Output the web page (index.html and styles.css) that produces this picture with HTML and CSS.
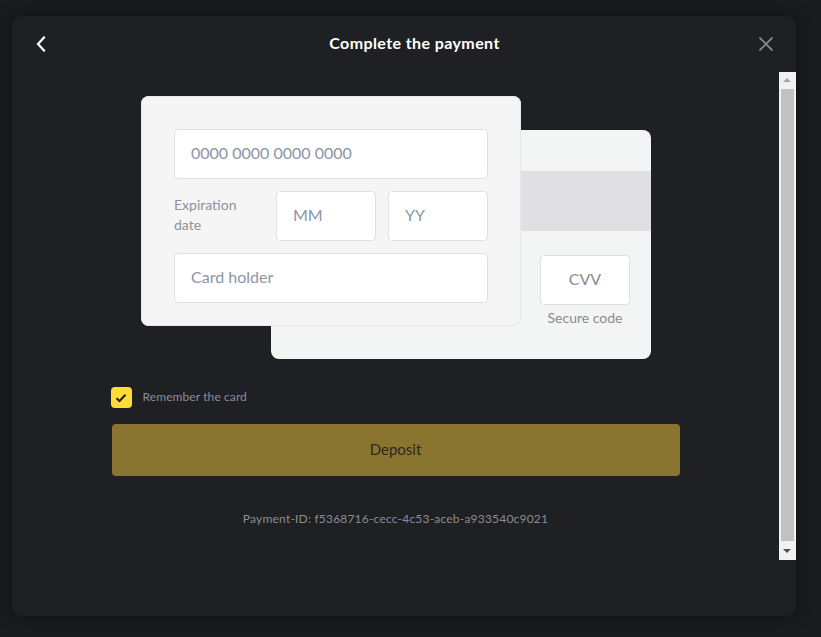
FILE: index.html
```html
<!DOCTYPE html>
<html lang="en">
<head>
<meta charset="utf-8">
<title>Complete the payment</title>
<link rel="stylesheet" href="styles.css">
</head>
<body>
<div class="backdrop">
  <div class="modal">
    <header class="modal-header">
      <button class="icon-btn back" aria-label="Back">
        <svg width="12" height="16" viewBox="0 0 12 16"><path d="M9 1.5 L3 8 L9 14.5" fill="none" stroke="#ffffff" stroke-width="2.2" stroke-linecap="square"/></svg>
      </button>
      <h1 class="title">Complete the payment</h1>
      <button class="icon-btn close" aria-label="Close">
        <svg width="16" height="16" viewBox="0 0 16 16"><path d="M1.5 1.5 L14.5 14.5 M14.5 1.5 L1.5 14.5" fill="none" stroke="#84858d" stroke-width="1.8"/></svg>
      </button>
    </header>
    <div class="modal-body">
      <div class="scroll-content">
        <div class="cards">
          <div class="card card-back">
            <div class="stripe"></div>
            <div class="cvv-wrap">
              <div class="field cvv">CVV</div>
              <div class="cvv-label">Secure code</div>
            </div>
          </div>
          <div class="card card-front">
            <div class="field wide">0000 0000 0000 0000</div>
            <div class="exp-row">
              <div class="exp-label">Expiration<br>date</div>
              <div class="field">MM</div>
              <div class="field">YY</div>
            </div>
            <div class="field wide">Card holder</div>
          </div>
        </div>
        <div class="form-bottom">
          <label class="remember">
            <span class="checkbox">
              <svg width="12" height="10" viewBox="0 0 12 10"><path d="M1.5 5.2 L4.5 8 L10.5 1.8" fill="none" stroke="#1f2024" stroke-width="2"/></svg>
            </span>
            <span class="remember-text">Remember the card</span>
          </label>
          <button class="deposit">Deposit</button>
          <p class="payment-id">Payment-ID: f5368716-cecc-4c53-aceb-a933540c9021</p>
        </div>
      </div>
      <div class="scrollbar">
        <div class="sb-arrow up"></div>
        <div class="sb-thumb"></div>
        <div class="sb-arrow down"></div>
      </div>
    </div>
  </div>
</div>
</body>
</html>
```

FILE: styles.css
```css
* { box-sizing: border-box; }
html, body { margin: 0; padding: 0; }
body {
  background: #1a1b1e;
  font-family: Lato, "Noto Sans", sans-serif;
  width: 821px;
  height: 637px;
  overflow: hidden;
}
.backdrop {
  padding: 16px 25px 21px 12px;
  height: 637px;
}
.modal {
  width: 784px;
  height: 600px;
  background: #1f2024;
  border-radius: 10px;
  box-shadow: 0 0 18px rgba(0,0,0,0.35);
  display: flex;
  flex-direction: column;
}
.modal-header {
  height: 56px;
  display: flex;
  align-items: center;
  justify-content: space-between;
  padding: 0 21px 0 20px;
}
.icon-btn {
  background: none;
  border: 0;
  padding: 0;
  width: 18px;
  height: 18px;
  display: flex;
  align-items: center;
  justify-content: center;
  cursor: pointer;
}
.title {
  margin: 0;
  color: #ffffff;
  font-size: 16px;
  font-weight: 700;
  letter-spacing: 0.4px;
  padding-left: 22px;
  line-height: 20px;
  transform: translateY(-1px);
}
.modal-body {
  height: 488px;
  display: flex;
}
.scroll-content {
  flex: 1;
  padding-top: 24px;
  display: flex;
  flex-direction: column;
  align-items: center;
}
.cards {
  display: grid;
  width: 510px;
  margin-left: 1px;
}
.card {
  grid-area: 1 / 1;
  width: 380px;
  border-radius: 8px;
}
.card-front {
  background: #f5f5f5;
  height: 230px;
  padding: 33px 33px 23px;
  display: flex;
  flex-direction: column;
  gap: 12px;
  z-index: 2;
  box-shadow: inset 0 0 0 1px #e6e7e9;
}
.card-back {
  background: #f3f4f4;
  height: 229px;
  margin: 34px 0 0 130px;
  padding-top: 41px;
  z-index: 1;
}
.stripe {
  height: 60px;
  background: #e0e0e2;
}
.cvv-wrap {
  display: flex;
  flex-direction: column;
  align-items: center;
  width: 90px;
  margin: 24px 0 0 269px;
}
.field {
  background: #ffffff;
  border: 1px solid #dfe0e2;
  border-radius: 4px;
  height: 50px;
  display: flex;
  align-items: center;
  padding: 0 0 3px 16px;
  font-size: 16px;
  color: #8b95a6;
}
.field.wide { width: 314px; }
.exp-row {
  display: grid;
  grid-template-columns: 90px 100px 100px;
  gap: 12px;
  align-items: center;
}
.exp-label {
  font-size: 14px;
  line-height: 20px;
  color: #8d929c;
  margin-top: -2px;
}
.cvv {
  width: 90px;
  padding-left: 0;
  justify-content: center;
  color: #8a8b93;
}
.cvv-label {
  margin-top: 4px;
  font-size: 14px;
  color: #8a8b93;
  white-space: nowrap;
}
.form-bottom {
  width: 568px;
  margin-top: 28px;
  display: flex;
  flex-direction: column;
}
.remember {
  display: flex;
  align-items: center;
  gap: 11px;
  margin-left: -1px;
}
.checkbox {
  width: 21px;
  height: 21px;
  border-radius: 4px;
  background: #fedb37;
  display: flex;
  align-items: center;
  justify-content: center;
}
.remember-text {
  font-size: 12px;
  color: #8b8c94;
  letter-spacing: 0.1px;
  margin-top: -2px;
}
.deposit {
  margin-top: 16px;
  height: 52px;
  border: 0;
  border-radius: 4px;
  background: #8a7530;
  color: #2b2820;
  font-family: Lato, "Noto Sans", sans-serif;
  font-size: 15px;
  padding: 0 0 2px;
}
.payment-id {
  margin: 35px 0 0;
  text-align: center;
  font-size: 12px;
  letter-spacing: 0.2px;
  color: #8b8c94;
}
.scrollbar {
  width: 17px;
  background: #f1f1f1;
  display: flex;
  flex-direction: column;
  align-items: center;
}
.sb-arrow {
  height: 17px;
  width: 17px;
  position: relative;
}
.sb-arrow::after {
  content: "";
  position: absolute;
  left: 4px;
  top: 6px;
  border-left: 4px solid transparent;
  border-right: 4px solid transparent;
}
.sb-arrow.up::after { border-bottom: 4px solid #a3a3a3; }
.sb-arrow.down::after { border-top: 4px solid #505050; }
.sb-thumb {
  flex: 1;
  width: 13px;
  background: #c1c1c1;
  margin: 0 0 2px;
}
```
